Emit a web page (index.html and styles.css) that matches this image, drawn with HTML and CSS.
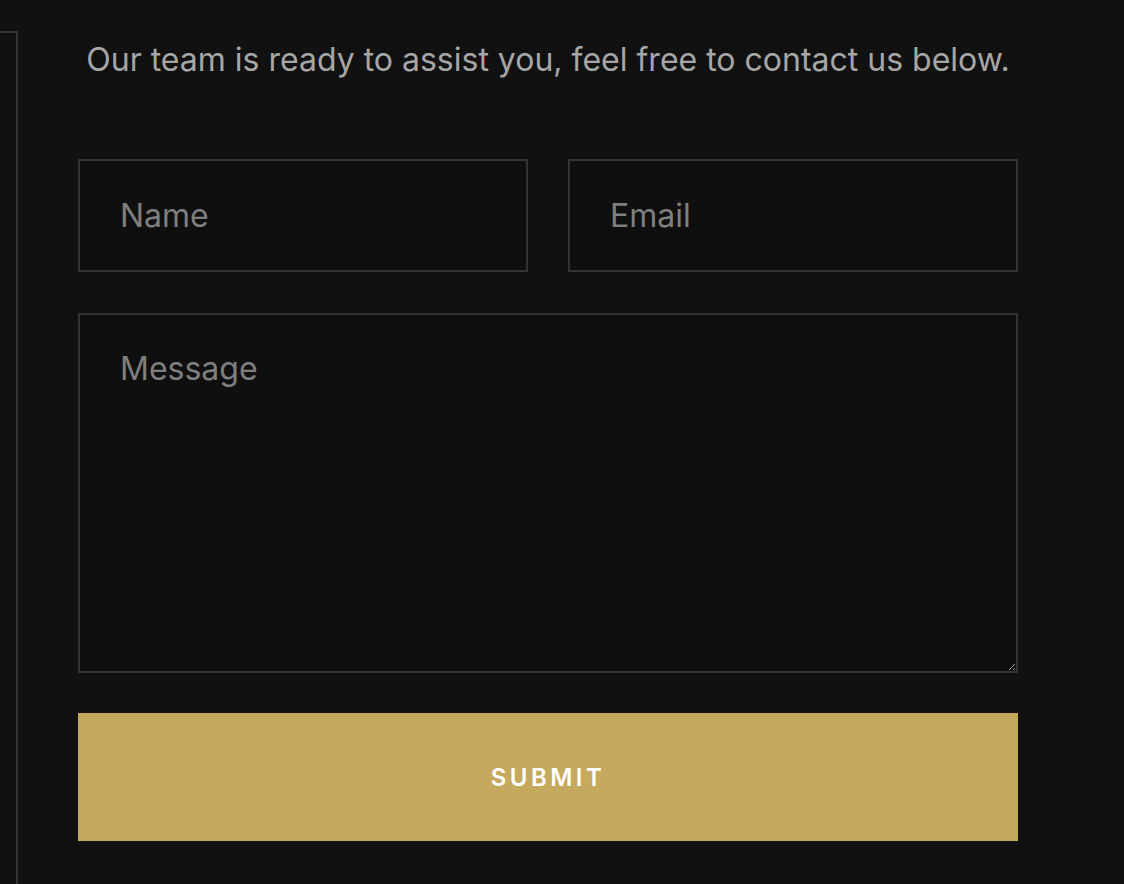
FILE: index.html
```html
<!DOCTYPE html>
<html lang="en">
<head>
    <meta charset="UTF-8">
    <meta name="viewport" content="width=device-width, initial-scale=1.0">
    <title>Contact</title>
    <link rel="stylesheet" href="styles.css">
</head>
<body>

<!-- Left rail (panel cut off by the viewport) -->
<div class="rail"></div>

<!-- Contact Section -->
<div class="contact">
    <p class="intro">Our team is ready to assist you, feel free to contact us below.</p>

    <form class="contact-form" onsubmit="return false;">
        <input type="text" class="field" placeholder="Name">
        <input type="email" class="field" placeholder="Email">
        <textarea class="field message" placeholder="Message"></textarea>
        <button type="submit" class="submit">Submit</button>
    </form>
</div>

</body>
</html>
```

FILE: styles.css
```css
/* Global Styles */
body {
    font-family: 'Inter', 'Noto Sans', sans-serif;
    margin: 0;
    padding: 0;
    display: flex;
    align-items: flex-start;
    height: 100vh;
    background: #111111;
    color: #a9a9a9;
    overflow: hidden;
}

/* Rail Styles */
.rail {
    box-sizing: border-box;
    width: 18px;
    height: calc(100vh - 31px);
    margin-top: 31px;
    border-top: 2px solid #333333;
    border-right: 2px solid #333333;
    flex-shrink: 0;
}

/* Contact Section */
.contact {
    width: 940px;
    flex-shrink: 0;
    margin-left: 60px;
    padding-top: 38px;
}

.intro {
    margin: 0;
    font-size: 32px;
    line-height: 44px;
    text-align: center;
    color: #a6a6a6;
}

/* Form Styles */
.contact-form {
    display: grid;
    grid-template-columns: minmax(0, 1fr) minmax(0, 1fr);
    column-gap: 40px;
    row-gap: 41px;
    margin-top: 77px;
}

.field {
    box-sizing: border-box;
    width: 100%;
    height: 113px;
    padding: 0 40px;
    margin: 0;
    background: #0f0f0f;
    border: 2px solid #333333;
    border-radius: 0;
    font-family: inherit;
    font-size: 32px;
    color: #d0d0d0;
    outline: none;
}

.field::placeholder {
    color: #7f7f7f;
}

.message {
    grid-column: 1 / 3;
    height: 360px;
    padding: 32px 40px;
    line-height: 44px;
    resize: vertical;
}

/* Button Styles */
.submit {
    grid-column: 1 / 3;
    height: 128px;
    margin-top: -1px;
    background-color: #c5a95d;
    color: #ffffff;
    border: none;
    font-family: inherit;
    font-size: 24px;
    font-weight: 600;
    letter-spacing: 3.5px;
    text-transform: uppercase;
    cursor: pointer;
}
```
